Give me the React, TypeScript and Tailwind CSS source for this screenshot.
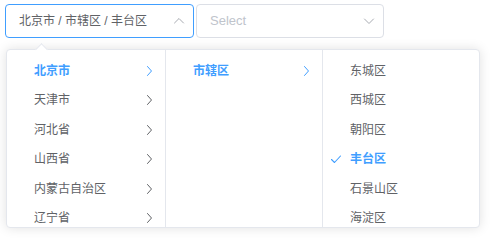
import React from 'react';

const provinces = ['北京市', '天津市', '河北省', '山西省', '内蒙古自治区', '辽宁省'];
const cities = ['市辖区'];
const districts = ['东城区', '西城区', '朝阳区', '丰台区', '石景山区', '海淀区'];

const Chevron = ({ dir, className }: { dir: 'up' | 'down' | 'right'; className: string }) => {
  const d =
    dir === 'right' ? 'M4.5 1.5 L8.5 6 L4.5 10.5' : dir === 'up' ? 'M1.5 8 L6 3.5 L10.5 8' : 'M1.5 4 L6 8.5 L10.5 4';
  return (
    <svg viewBox="0 0 12 12" className={className} fill="none" stroke="currentColor" strokeWidth="1">
      <path d={d} strokeLinecap="round" strokeLinejoin="round" />
    </svg>
  );
};

const Item = ({ label, active, check, arrow }: { label: string; active?: boolean; check?: boolean; arrow?: boolean }) => (
  <div
    className={`relative flex items-center h-[29.5px] pl-[27px] pr-[10px] text-[12px] ${
      active ? 'text-[#409eff] font-bold' : 'text-[#606266]'
    }`}
  >
    {check && (
      <svg viewBox="0 0 12 12" className="absolute left-[7px] w-[12px] h-[12px] text-[#409eff]" fill="none" stroke="currentColor" strokeWidth="1.1">
        <path d="M1.5 6.5 L4.5 9.5 L10.5 3" strokeLinecap="round" strokeLinejoin="round" />
      </svg>
    )}
    <span className="flex-1">{label}</span>
    {arrow && <Chevron dir="right" className={`w-[12px] h-[12px] ${active ? 'text-[#409eff]' : 'text-[#606266]'}`} />}
  </div>
);

export default function App() {
  return (
    <div
      className="relative w-[500px] h-[238px] bg-white overflow-hidden pt-[4px] pl-[5px]"
      style={{ fontFamily: '"Liberation Sans", "Noto Sans CJK SC", sans-serif' }}
    >
      <div className="flex gap-[2px]">
        <div className="flex items-center w-[189px] h-[34px] rounded-[4px] border border-[#409eff] pl-[13px] pr-[8px]">
          <span className="flex-1 text-[12px] text-[#606266]">北京市 / 市辖区 / 丰台区</span>
          <Chevron dir="up" className="w-[12px] h-[12px] text-[#a8abb2]" />
        </div>
        <div className="flex items-center w-[188px] h-[34px] rounded-[4px] border border-[#dcdfe6] pl-[13px] pr-[8px]">
          <span className="flex-1 text-[13px] text-[#c0c4cc]">Select</span>
          <Chevron dir="down" className="w-[12px] h-[12px] text-[#a8abb2]" />
        </div>
      </div>

      <div className="absolute left-[6px] top-[49px] w-[474px] h-[179px] bg-white border border-[#e4e7ed] rounded-[4px] shadow-[0_0_12px_rgba(0,0,0,0.12)]">
        <div className="absolute left-[30px] top-[-5px] w-[9px] h-[9px] rotate-45 bg-white border-l border-t border-[#e4e7ed]" />
        <div className="flex h-full overflow-hidden rounded-[4px]">
          <div className="w-[159px] border-r border-[#e4e7ed] pt-[6px]">
            {provinces.map((p, i) => (
              <Item key={p} label={p} active={i === 0} arrow />
            ))}
          </div>
          <div className="w-[157px] border-r border-[#e4e7ed] pt-[6px]">
            {cities.map((c) => (
              <Item key={c} label={c} active arrow />
            ))}
          </div>
          <div className="flex-1 pt-[6px]">
            {districts.map((d) => (
              <Item key={d} label={d} active={d === '丰台区'} check={d === '丰台区'} />
            ))}
          </div>
        </div>
      </div>
    </div>
  );
}
